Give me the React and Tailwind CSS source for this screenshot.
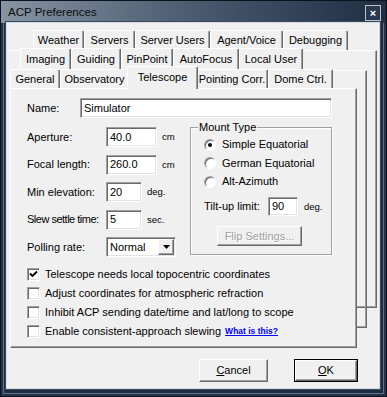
import React from "react";

const sunken =
  "bg-white border-t border-l border-t-[#a0a0a0] border-l-[#a0a0a0] border-b border-r border-b-white border-r-white shadow-[inset_1px_1px_0_#696969,inset_-1px_-1px_0_#e3e3e3]";
const raised =
  "bg-[#f0f0f0] border-t border-l border-t-white border-l-white border-b border-r border-b-[#696969] border-r-[#696969] shadow-[inset_-1px_-1px_0_#a0a0a0]";
const backPage =
  "absolute left-[3px] h-[258px] border-t border-t-white border-r border-b border-r-[#696969] border-b-[#696969] shadow-[inset_-1px_-1px_0_#a0a0a0]";

function Tab({ label, className, selected }) {
  return (
    <div
      className={
        "flex items-center justify-center bg-[#f0f0f0] rounded-t-[2px] border-t border-l border-t-white border-l-white border-r border-r-[#696969] shadow-[inset_-1px_0_0_#a0a0a0] " +
        (selected ? "relative z-10 h-[23px] -mx-[2px] mb-[-1px] pb-[1px] " : "h-full ") +
        className
      }
    >
      {label}
    </div>
  );
}

function Field({ label, value, inputClass, unit, labelClass = "" }) {
  return (
    <div className="flex items-center h-[20px]">
      <span className={"w-[79px] whitespace-nowrap " + labelClass}>{label}</span>
      <div className={sunken + " h-full flex items-center pl-[3px] " + inputClass}>{value}</div>
      {unit && <span className="ml-[5px] text-[9.5px]">{unit}</span>}
    </div>
  );
}

function Radio({ label, checked }) {
  return (
    <div className="flex items-center h-[15px]">
      <div className="w-[12px] h-[12px] rounded-full bg-white border border-t-[#a0a0a0] border-l-[#a0a0a0] border-b-white border-r-white shadow-[inset_1px_1px_0_#696969] flex items-center justify-center">
        {checked && <div className="w-[4px] h-[4px] rounded-full bg-black" />}
      </div>
      <span className="ml-[6px]">{label}</span>
    </div>
  );
}

function Check({ label, checked, children }) {
  return (
    <div className="flex items-center h-[15px]">
      <div className={sunken + " w-[13px] h-[13px] flex items-center justify-center"}>
        {checked && (
          <svg width="9" height="9" viewBox="0 0 9 9">
            <path d="M1 3.5 L3.5 6 L8 1.5" fill="none" stroke="#000" strokeWidth="1.9" />
          </svg>
        )}
      </div>
      <span className="ml-[5px]">{label}</span>
      {children}
    </div>
  );
}

export default function App() {
  return (
    <div className="w-[387px] h-[397px] flex flex-col bg-[#1d2c40] border border-[#0b121c] shadow-[inset_0_0_0_2px_#22334a,inset_0_0_0_3px_#5d7089] text-[11px] leading-none text-black font-['Liberation_Sans',Arial,sans-serif]">
      {/* title bar */}
      <div className="h-[22px] flex items-start justify-between pl-[7px] pr-[5px] bg-gradient-to-r from-[#8694a3] via-[#4a5b70] to-[#1f2e43]">
        <span className="mt-[6px] text-[11.5px] text-[#0c0c0c]">ACP Preferences</span>
        <div className="mt-[4px] w-[16px] h-[16px] border border-[#b9c1cb] bg-[#2a3a50] flex items-center justify-center text-white text-[11px] font-bold">
          ×
        </div>
      </div>

      {/* client */}
      <div className="relative flex-1 ml-[6px] mr-[7px] mb-[8px] bg-[#f0f0f0] shadow-[0_0_0_1px_#d5dae0,0_0_0_2px_#3a4a60]">
        {/* pages behind the front one */}
        <div className={backPage + " top-[27px] w-[367px]"} />
        <div className={backPage + " top-[47px] w-[357px]"} />

        {/* tab rows */}
        <div className="relative pt-[7px]">
          <div className="flex ml-[26px] h-[20px]">
            <Tab label="Weather" className="w-[51px]" />
            <Tab label="Servers" className="w-[51px]" />
            <Tab label="Server Users" className="w-[75px]" />
            <Tab label="Agent/Voice" className="w-[73px]" />
            <Tab label="Debugging" className="w-[65px]" />
          </div>
          <div className="flex ml-[13px] h-[21px] -mt-[2px]">
            <Tab label="Imaging" className="w-[51px]" />
            <Tab label="Guiding" className="w-[50px]" />
            <Tab label="PinPoint" className="w-[52px]" />
            <Tab label="AutoFocus" className="w-[66px]" />
            <Tab label="Local User" className="w-[64px]" />
          </div>
          <div className="flex items-end ml-[3px] h-[19px]">
            <Tab label="General" className="w-[50px]" />
            <Tab label="Observatory" className="w-[69px]" />
            <Tab label="Telescope" className="w-[71px]" selected />
            <Tab label="Pointing Corr." className="w-[72px]" />
            <Tab label="Dome Ctrl." className="w-[65px]" />
          </div>
        </div>

        {/* front page */}
        <div className="relative ml-[3px] w-[347px] h-[260px] bg-[#f0f0f0] border-t border-l border-t-white border-l-white border-r border-b border-r-[#696969] border-b-[#696969] shadow-[inset_-1px_-1px_0_#a0a0a0] pl-[16px] pt-[9px]">
          <div className="flex items-center h-[20px]">
            <span className="w-[53px]">Name:</span>
            <div className={sunken + " h-full w-[252px] flex items-center pl-[3px]"}>Simulator</div>
          </div>

          <div className="flex mt-[9px]">
            <div className="w-[163px] flex flex-col gap-[7.5px]">
              <Field label="Aperture:" value="40.0" inputClass="w-[51px]" unit="cm" />
              <Field label="Focal length:" value="260.0" inputClass="w-[51px]" unit="cm" />
              <Field label="Min elevation:" value="20" inputClass="w-[36px]" unit="deg." />
              <Field label="Slew settle time:" value="5" inputClass="w-[36px]" unit="sec." labelClass="tracking-[-0.5px]" />
              <div className="flex items-center h-[20px]">
                <span className="w-[79px]">Polling rate:</span>
                <div className={sunken + " h-full w-[70px] flex items-center justify-between pl-[3px] pr-[1px]"}>
                  <span>Normal</span>
                  <div className={raised + " w-[16px] h-[16px] flex items-center justify-center"}>
                    <svg width="7" height="4" viewBox="0 0 7 4">
                      <path d="M0 0 H7 L3.5 4 Z" fill="#000" />
                    </svg>
                  </div>
                </div>
              </div>
            </div>

            <div className="relative w-[142px] h-[128px] border border-[#a0a0a0] shadow-[inset_1px_1px_0_#fff,1px_1px_0_#fff] pl-[13px] pt-[9px]">
              <span className="absolute left-[7px] -top-[6px] px-[1px] bg-[#f0f0f0]">Mount Type</span>
              <div className="flex flex-col gap-[3.5px]">
                <Radio label="Simple Equatorial" checked />
                <Radio label="German Equatorial" />
                <Radio label="Alt-Azimuth" />
              </div>
              <div className="flex items-center h-[19px] mt-[8px]">
                <span className="w-[64px]">Tilt-up limit:</span>
                <div className={sunken + " h-full w-[30px] flex items-center pl-[3px]"}>90</div>
                <span className="ml-[6px] text-[9.5px]">deg.</span>
              </div>
              <div className={raised + " mt-[10px] ml-[13px] w-[85px] h-[20px] flex items-center justify-center text-[#a0a0a0] [text-shadow:1px_1px_0_#fff]"}>
                Flip Settings...
              </div>
            </div>
          </div>

          <div className="flex flex-col gap-[4px] mt-[10px]">
            <Check label="Telescope needs local topocentric coordinates" checked />
            <Check label="Adjust coordinates for atmospheric refraction" />
            <Check label="Inhibit ACP sending date/time and lat/long to scope" />
            <Check label="Enable consistent-approach slewing">
              <span className="ml-[4px] text-[8.5px] font-bold text-[#0000ff] underline">What is this?</span>
            </Check>
          </div>
        </div>

        {/* buttons */}
        <div className="flex justify-end gap-[26px] pr-[21px] mt-[11px]">
          <div className={raised + " w-[69px] h-[23px] flex items-center justify-center"}>
            <span><u>C</u>ancel</span>
          </div>
          <div className="w-[64px] h-[23px] border border-black">
            <div className={raised + " w-full h-full flex items-center justify-center"}>
              <span><u>O</u>K</span>
            </div>
          </div>
        </div>
      </div>
    </div>
  );
}
